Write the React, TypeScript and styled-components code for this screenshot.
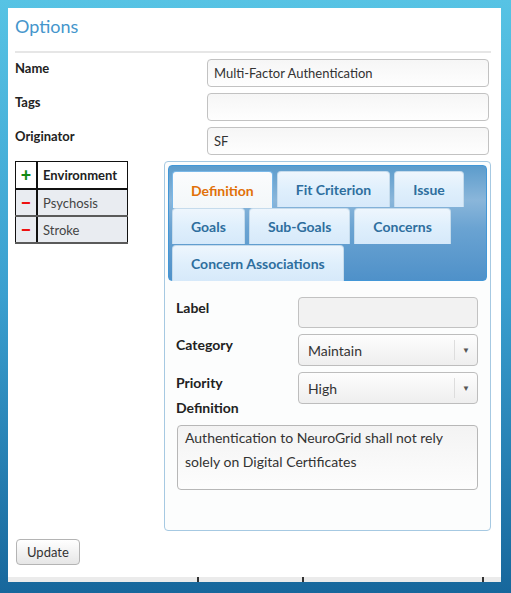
import styled, { createGlobalStyle } from "styled-components";

const GlobalStyle = createGlobalStyle`
  html, body {
    margin: 0;
    padding: 0;
    height: 100%;
    overflow: hidden;
  }
  body {
    background: linear-gradient(180deg, #57c3e4 0%, #3a9fcf 50%, #17679c 100%);
    font-family: "Lato", "Liberation Sans", sans-serif;
    color: #333;
  }
`;

const Page = styled.div`
  padding: 8px 10px 0 8px;
  height: 100vh;
  box-sizing: border-box;
`;

const Panel = styled.div`
  background: #fff;
  height: 574px;
  display: flex;
  flex-direction: column;
`;

const Body = styled.div`
  flex: 1;
  padding: 0 10px 0 7px;
`;

const Title = styled.h2`
  margin: 0;
  padding: 7px 0 0;
  height: 36px;
  font-size: 18px;
  font-weight: 400;
  color: #4596cc;
  border-bottom: 2px solid #e6e6e6;
`;

const TopForm = styled.div`
  display: grid;
  grid-template-columns: 192px 282px;
  row-gap: 6px;
  margin-top: 6px;
`;

const FieldLabel = styled.label`
  font-size: 13px;
  font-weight: 700;
  color: #222;
  padding-top: 1px;
`;

const TextInput = styled.div<{ $muted?: boolean }>`
  height: 28px;
  box-sizing: border-box;
  border: 1px solid #c2c2c2;
  border-radius: 4px;
  background: ${(p) =>
    p.$muted ? "#f2f2f2" : "linear-gradient(180deg, #f6f6f6, #fefefe)"};
  font-size: 13px;
  padding: 0 6px;
  display: flex;
  align-items: center;
  color: #333;
`;

const Lower = styled.div`
  display: flex;
  align-items: flex-start;
  gap: 36px;
  margin-top: 6px;
`;

const EnvTable = styled.table`
  border-collapse: collapse;
  width: 113px;
  font-size: 13px;
  border: 1px solid #111;
`;

const Cell = styled.td<{ $head?: boolean; $icon?: boolean }>`
  height: ${(p) => (p.$head ? "26px" : "25px")};
  padding: 0 ${(p) => (p.$icon ? "0" : "5px")};
  text-align: ${(p) => (p.$icon ? "center" : "left")};
  width: ${(p) => (p.$icon ? "20px" : "auto")};
  background: ${(p) => (p.$head ? "#fff" : "#e9ecf1")};
  font-weight: ${(p) => (p.$head ? 700 : 400)};
  color: ${(p) => (p.$head ? "#222" : "#444")};
  border-right: 2px solid #111;
  border-bottom: 2px solid ${(p) => (p.$head ? "#111" : "#5a5a5a")};
  &:last-child {
    border-right: 0;
  }
`;

const Sign = styled.span<{ $plus?: boolean }>`
  display: inline-block;
  font-size: 18px;
  font-weight: 900;
  line-height: 1;
  color: ${(p) => (p.$plus ? "#138a13" : "#ee1111")};
`;

const TabsBox = styled.div`
  width: 327px;
  height: 370px;
  box-sizing: border-box;
  border: 1px solid #a6c9e2;
  border-radius: 4px;
  padding: 3px;
  background: #fcfdfd;
`;

const TabNav = styled.ul`
  list-style: none;
  margin: 0;
  padding: 5px 0 0 3px;
  height: 116px;
  box-sizing: border-box;
  border: 1px solid #4297d7;
  border-radius: 4px;
  background: linear-gradient(180deg, #5c9ccc 0%, #8ab6da 30%, #6aa3d2 55%, #4f91c9 100%);
  display: flex;
  flex-wrap: wrap;
  align-content: flex-start;
  gap: 1px 4px;
`;

const Tab = styled.li<{ $active?: boolean }>`
  height: ${(p) => (p.$active ? "37px" : "36px")};
  box-sizing: border-box;
  padding: 0 18px;
  display: flex;
  align-items: center;
  font-size: 14px;
  font-weight: 700;
  border: 1px solid ${(p) => (p.$active ? "#79b7e7" : "#c5dbec")};
  border-bottom: 0;
  border-radius: 4px 4px 0 0;
  background: ${(p) =>
    p.$active
      ? "linear-gradient(180deg, #fbfcfd, #f3f7f9)"
      : "linear-gradient(180deg, #eef6fd 0%, #dfeffc 50%, #d6e9fa 100%)"};
  color: ${(p) => (p.$active ? "#e17009" : "#2e6e9e")};
  margin-bottom: ${(p) => (p.$active ? "-1px" : "0")};
`;

const TabContent = styled.div`
  padding: 16px 8px 0 8px;
`;

const DefGrid = styled.div`
  display: grid;
  grid-template-columns: 122px 180px;
  grid-template-rows: 31px 32px 32px;
  row-gap: 6px;
`;

const SubLabel = styled.div<{ $pull?: boolean }>`
  font-size: 14px;
  font-weight: 700;
  color: #222;
  padding-top: 2px;
  margin-top: ${(p) => (p.$pull ? "-7px" : "0")};
  line-height: 18px;
`;

const Select = styled.div`
  box-sizing: border-box;
  border: 1px solid #bdbdbd;
  border-radius: 4px;
  background: linear-gradient(180deg, #fdfdfd, #eeeeee);
  display: flex;
  align-items: center;
  font-size: 14px;
  color: #333;
`;

const SelectValue = styled.span`
  flex: 1;
  padding-left: 9px;
  padding-top: 1px;
`;

const Caret = styled.span`
  width: 22px;
  height: 20px;
  border-left: 1px solid #ddd;
  display: flex;
  align-items: center;
  justify-content: center;
  font-size: 8px;
  color: #555;
`;

const TextArea = styled.div`
  margin: 8px 0 0 1px;
  width: 301px;
  height: 65px;
  box-sizing: border-box;
  border: 1px solid #b7b7b7;
  border-radius: 4px;
  background: linear-gradient(180deg, #f3f3f3, #fdfdfd);
  padding: 0 7px;
  font-size: 14px;
  line-height: 24px;
  color: #333;
`;

const Button = styled.button`
  margin: 8px 0 0 1px;
  height: 26px;
  padding: 0 10px;
  border: 1px solid #b4b4b4;
  border-radius: 4px;
  background: linear-gradient(180deg, #ffffff, #e6e6e6);
  font-family: inherit;
  font-size: 13px;
  color: #333;
`;

const FooterStrip = styled.div`
  height: 5px;
  background: #ebebeb;
  display: grid;
  grid-template-columns: 191px 105px 180px 1fr;
`;

const StripCol = styled.div`
  border-right: 2px solid #333;
`;

const tabs = [
  "Definition",
  "Fit Criterion",
  "Issue",
  "Goals",
  "Sub-Goals",
  "Concerns",
  "Concern Associations",
];

export default function App() {
  return (
    <Page>
      <GlobalStyle />
      <Panel>
        <Body>
          <Title>Options</Title>
          <TopForm>
            <FieldLabel>Name</FieldLabel>
            <TextInput>Multi-Factor Authentication</TextInput>
            <FieldLabel>Tags</FieldLabel>
            <TextInput />
            <FieldLabel>Originator</FieldLabel>
            <TextInput>SF</TextInput>
          </TopForm>
          <Lower>
            <EnvTable>
              <tbody>
                <tr>
                  <Cell $head $icon>
                    <Sign $plus>+</Sign>
                  </Cell>
                  <Cell $head>Environment</Cell>
                </tr>
                {["Psychosis", "Stroke"].map((env) => (
                  <tr key={env}>
                    <Cell $icon>
                      <Sign>−</Sign>
                    </Cell>
                    <Cell>{env}</Cell>
                  </tr>
                ))}
              </tbody>
            </EnvTable>
            <TabsBox>
              <TabNav>
                {tabs.map((t, i) => (
                  <Tab key={t} $active={i === 0}>
                    {t}
                  </Tab>
                ))}
              </TabNav>
              <TabContent>
                <DefGrid>
                  <SubLabel>Label</SubLabel>
                  <TextInput $muted style={{ height: 31 }} />
                  <SubLabel>Category</SubLabel>
                  <Select>
                    <SelectValue>Maintain</SelectValue>
                    <Caret>▼</Caret>
                  </Select>
                  <SubLabel>Priority</SubLabel>
                  <Select>
                    <SelectValue>High</SelectValue>
                    <Caret>▼</Caret>
                  </Select>
                </DefGrid>
                <SubLabel $pull>Definition</SubLabel>
                <TextArea>
                  Authentication to NeuroGrid shall not rely solely on Digital
                  Certificates
                </TextArea>
              </TabContent>
            </TabsBox>
          </Lower>
          <Button>Update</Button>
        </Body>
        <FooterStrip>
          <StripCol />
          <StripCol />
          <StripCol />
        </FooterStrip>
      </Panel>
    </Page>
  );
}
